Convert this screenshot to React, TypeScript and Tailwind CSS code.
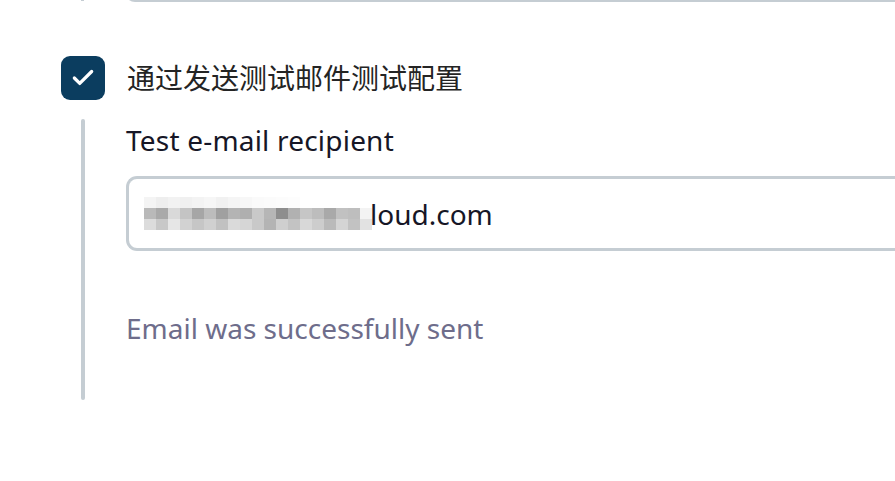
import { Check } from "lucide-react";

const mosaic = [
    ["bg-[#f4f4f4]", "bg-[#eeeeee]", "bg-[#f2f2f2]", "bg-[#f0f0f0]", "bg-[#f3f3f3]", "bg-[#f6f6f6]", "bg-[#f1f1f1]", "bg-[#f5f5f5]", "bg-[#f7f7f7]", "bg-[#fafafa]", "bg-[#fbfbfb]", "bg-[#fcfcfc]", "bg-[#fdfdfd]", "bg-white", "bg-white", "bg-white", "bg-white", "bg-white", "bg-white"],
    ["bg-[#b9b9b9]", "bg-[#a9a9a9]", "bg-[#d9d9d9]", "bg-[#c4c4c4]", "bg-[#a6a6a6]", "bg-[#bcbcbc]", "bg-[#a0a0a0]", "bg-[#b4b4b4]", "bg-[#afafaf]", "bg-[#c9c9c9]", "bg-[#b6b6b6]", "bg-[#8e8e8e]", "bg-[#b1b1b1]", "bg-[#c6c6c6]", "bg-[#bdbdbd]", "bg-[#a9a9a9]", "bg-[#c1c1c1]", "bg-[#bebebe]", "bg-[#f3f3f3]"],
    ["bg-[#dcdcdc]", "bg-[#c8c8c8]", "bg-[#e6e6e6]", "bg-[#d2d2d2]", "bg-[#c6c6c6]", "bg-[#d0d0d0]", "bg-[#c1c1c1]", "bg-[#dadada]", "bg-[#d6d6d6]", "bg-[#c9c9c9]", "bg-[#b4b4b4]", "bg-[#cfcfcf]", "bg-[#c3c3c3]", "bg-[#d8d8d8]", "bg-[#cdcdcd]", "bg-[#bababa]", "bg-[#d4d4d4]", "bg-[#c2c2c2]", "bg-[#e2e2e2]"],
];

const App = () => {
    return (
        <div className="min-h-screen bg-white pl-[61px] font-['Noto_Sans','Noto_Sans_CJK_SC',sans-serif] text-[28px]">
            {/* bottom edge of the previous field */}
            <div className="flex h-[2px] overflow-hidden">
                <div className="ml-[20px] h-[1px] w-[3px] bg-[#c5cdd3]" />
                <div className="-mt-[20px] ml-[41px] h-[22px] flex-1 rounded-bl-[10px] border-b-[2px] border-l-[3px] border-[#c5cdd3]" />
            </div>

            <div className="mt-[54px] flex items-center gap-[22px]">
                <div className="flex h-[44px] w-[44px] items-center justify-center rounded-[9px] bg-[#0b3d5f]">
                    <Check className="h-[26px] w-[26px] text-white" strokeWidth={3} />
                </div>
                <span className="leading-none text-[#242424]">通过发送测试邮件测试配置</span>
            </div>

            <div className="mt-[19px] flex">
                <div className="ml-[20px] h-[281px] w-[4px] shrink-0 rounded-full bg-[#c5cdd3]" />
                <div className="ml-[41px] flex flex-1 flex-col">
                    <label className="mt-[2px] block leading-[38px] tracking-[0.2px] text-[#161626]">Test e-mail recipient</label>
                    <div className="mt-[17px] flex h-[75px] items-center rounded-l-[11px] border-[3px] border-r-0 border-[#c5cdd3] pl-[15px]">
                        <div className="flex flex-col">
                            {mosaic.map((row, i) => (
                                <div key={i} className="flex">
                                    {row.map((c, j) => (
                                        <div key={j} className={`h-[11px] w-[12px] ${c}`} />
                                    ))}
                                </div>
                            ))}
                        </div>
                        <span className="-ml-[2px] leading-none text-[#161626]">loud.com</span>
                    </div>
                    <p className="mt-[58px] leading-[38px] text-[#6e6d8b]">Email was successfully sent</p>
                </div>
            </div>
        </div>
    );
};

export default App;
